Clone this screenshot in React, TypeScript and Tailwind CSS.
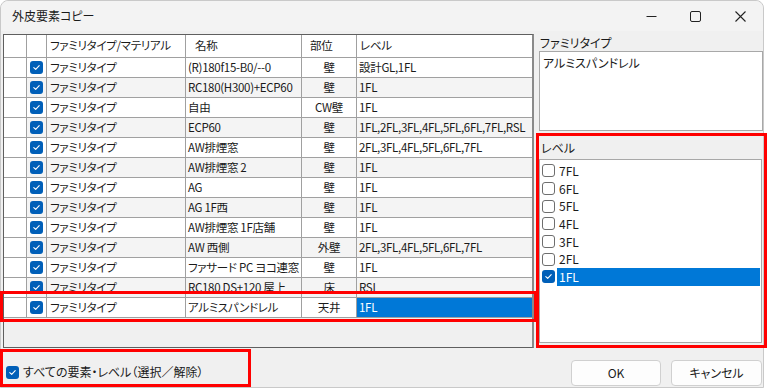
import React from 'react';

const FONT = { fontFamily: '"Noto Sans CJK JP", "Noto Sans", sans-serif' };

const rows = [
  ['(R)180f15-B0/--0', '壁', '設計GL,1FL'],
  ['RC180(H300)+ECP60', '壁', '1FL'],
  ['自由', 'CW壁', '1FL'],
  ['ECP60', '壁', '1FL,2FL,3FL,4FL,5FL,6FL,7FL,RSL'],
  ['AW排煙窓', '壁', '2FL,3FL,4FL,5FL,6FL,7FL'],
  ['AW排煙窓 2', '壁', '1FL'],
  ['AG', '壁', '1FL'],
  ['AG 1F西', '壁', '1FL'],
  ['AW排煙窓 1F店舗', '壁', '1FL'],
  ['AW 西側', '外壁', '2FL,3FL,4FL,5FL,6FL,7FL'],
  ['ファサード PC ヨコ連窓', '壁', '1FL'],
  ['RC180 DS+120 屋上', '床', 'RSL'],
  ['アルミスパンドレル', '天井', '1FL'],
];

const levels = ['7FL', '6FL', '5FL', '4FL', '3FL', '2FL', '1FL'];

function Check({ on }: { on: boolean }) {
  if (!on) {
    return <div className="w-[13px] h-[13px] rounded-[3px] border border-[#6e6e6e] bg-white shrink-0" />;
  }
  return (
    <div className="w-[13px] h-[13px] rounded-[3px] bg-[#005fb8] flex items-center justify-center shrink-0">
      <svg width="9" height="9" viewBox="0 0 9 9">
        <path d="M1.8 4.6 L3.7 6.4 L7.2 2.6" fill="none" stroke="#ffffff" strokeWidth="1.1" strokeLinecap="round" strokeLinejoin="round" />
      </svg>
    </div>
  );
}

export default function App() {
  return (
    <div className="relative w-[769px] h-[392px] bg-white overflow-hidden text-[12px] text-[#1a1a1a] [font-feature-settings:'palt']" style={FONT}>
      <div className="w-[764px] h-[388px] bg-[#f0f0f0] border border-[#c9c9c9] rounded-t-[8px] flex flex-col">
        {/* title bar */}
        <div className="h-[30px] flex items-center justify-between bg-[#f3f3f3] rounded-t-[8px] pl-[11px]">
          <span className="text-[12px] text-[#1a1a1a]">外皮要素コピー</span>
          <div className="flex items-center">
            <div className="w-[44px] h-[30px] flex items-center justify-center">
              <svg width="11" height="11" viewBox="0 0 11 11"><path d="M0.5 5.5 H10.5" stroke="#222" strokeWidth="1" /></svg>
            </div>
            <div className="w-[44px] h-[30px] flex items-center justify-center">
              <svg width="11" height="11" viewBox="0 0 11 11"><rect x="0.5" y="0.5" width="10" height="10" rx="1.5" fill="none" stroke="#222" strokeWidth="1" /></svg>
            </div>
            <div className="w-[46px] h-[30px] flex items-center justify-center">
              <svg width="11" height="11" viewBox="0 0 11 11"><path d="M0.5 0.5 L10.5 10.5 M10.5 0.5 L0.5 10.5" stroke="#222" strokeWidth="1.1" /></svg>
            </div>
          </div>
        </div>

        {/* body */}
        <div className="flex flex-1 pl-[2px] pt-[3px]">
          <div className="w-[531px] flex flex-col">
            {/* table */}
            <div className="h-[314px] border border-[#5f5f5f] border-r-[2px] border-r-[#8a8a8a] bg-[#f0f0f0] text-[11.5px] tracking-[-0.3px]">
              <div className="flex h-[23px] bg-white border-b border-[#a0a0a0]">
                <div className="w-[23px] border-r border-[#a0a0a0]" />
                <div className="w-[20px] border-r border-[#a0a0a0]" />
                <div className="w-[139px] border-r border-[#a0a0a0] pl-[3px] flex items-center">ファミリタイプ/マテリアル</div>
                <div className="w-[116px] border-r border-[#a0a0a0] pl-[9px] flex items-center">名称</div>
                <div className="w-[55px] border-r border-[#a0a0a0] pl-[8px] flex items-center">部位</div>
                <div className="flex-1 pl-[3px] flex items-center">レベル</div>
              </div>
              {rows.map((r, i) => {
                const bg = i % 2 === 1 ? 'bg-[#f4f4f4]' : 'bg-white';
                const last = i === rows.length - 1;
                return (
                  <div key={i} className={`flex h-[20px] border-b border-[#a0a0a0] ${bg}`}>
                    <div className="w-[23px] border-r border-[#a0a0a0] bg-white" />
                    <div className="w-[20px] border-r border-[#a0a0a0] flex items-center justify-center">
                      <Check on />
                    </div>
                    <div className="w-[139px] border-r border-[#a0a0a0] pl-[3px] flex items-center">ファミリタイプ</div>
                    <div className="w-[116px] border-r border-[#a0a0a0] pl-[2px] flex items-center whitespace-nowrap overflow-hidden">{r[0]}</div>
                    <div className="w-[55px] border-r border-[#a0a0a0] flex items-center justify-center">{r[1]}</div>
                    <div className={`flex-1 pl-[2px] flex items-center whitespace-nowrap overflow-hidden ${last ? 'bg-[#0078d7] text-white' : ''}`}>{r[2]}</div>
                  </div>
                );
              })}
            </div>
            {/* bottom checkbox */}
            <div className="flex items-center gap-[4px] pl-[3px] pt-[15px]">
              <Check on />
              <span className="text-[12px]">すべての要素・レベル（選択／解除）</span>
            </div>
          </div>

          {/* right panel */}
          <div className="ml-[5px] w-[224px] flex flex-col">
            <div className="h-[17px] flex items-center pl-[1px]">ファミリタイプ</div>
            <div className="h-[80px] bg-white border border-[#a8a8a8] px-[3px] pt-[2px]">アルミスパンドレル</div>
            <div className="h-[27px] mt-[1px] flex items-end pb-[2px] pl-[2px]">レベル</div>
            <div className="h-[184px] w-[223px] bg-white border border-[#a8a8a8] pt-[2px] pl-[2px] pr-[1px]">
              {levels.map((l) => {
                const sel = l === '1FL';
                return (
                  <div key={l} className="h-[17.7px] flex items-center">
                    <Check on={sel} />
                    <div className={`flex-1 h-[18px] ml-[2px] flex items-center pl-[2px] ${sel ? 'bg-[#0078d7] text-white' : ''}`}>{l}</div>
                  </div>
                );
              })}
            </div>
            <div className="flex gap-[10px] mt-[17px] ml-[32px]">
              <div className="w-[90px] h-[26px] rounded-[4px] bg-[#fdfdfd] border border-[#d0d0d0] flex items-center justify-center">OK</div>
              <div className="w-[91px] h-[26px] rounded-[4px] bg-[#fdfdfd] border border-[#d0d0d0] flex items-center justify-center">キャンセル</div>
            </div>
          </div>
        </div>
      </div>

      {/* red annotation boxes */}
      <div className="absolute left-0 top-[291px] w-[537px] h-[31px] border-[3px] border-[#ff0000]" />
      <div className="absolute left-[536px] top-[133px] w-[231px] h-[215px] border-[3px] border-[#ff0000]" />
      <div className="absolute left-0 top-[349px] w-[251px] h-[38px] border-[3px] border-[#ff0000]" />
    </div>
  );
}
